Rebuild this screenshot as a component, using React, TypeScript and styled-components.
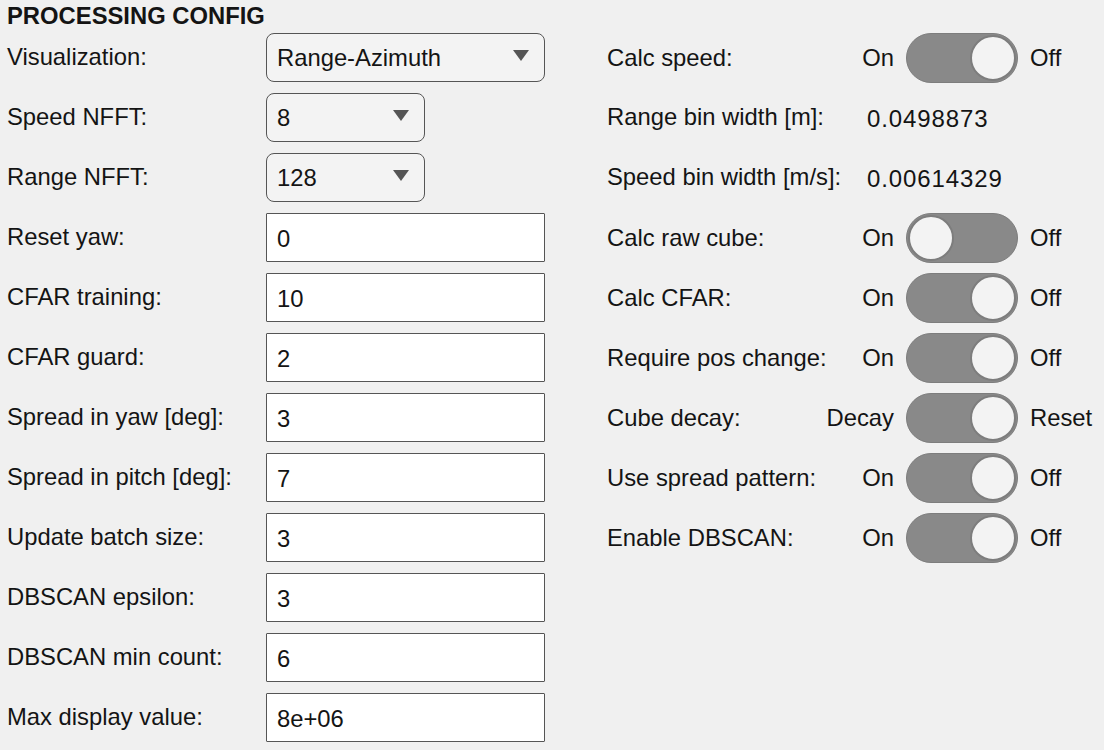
import { createGlobalStyle } from "styled-components";
import styled from "styled-components";

const GlobalStyle = createGlobalStyle`
  html, body {
    margin: 0;
    padding: 0;
    background: #f0f0f0;
  }
  body {
    font-family: "Liberation Sans", Arial, sans-serif;
    color: #141414;
  }
`;

const leftRows: { label: string; kind: "select" | "input"; value: string; wide?: boolean }[] = [
  { label: "Visualization:", kind: "select", value: "Range-Azimuth", wide: true },
  { label: "Speed NFFT:", kind: "select", value: "8" },
  { label: "Range NFFT:", kind: "select", value: "128" },
  { label: "Reset yaw:", kind: "input", value: "0" },
  { label: "CFAR training:", kind: "input", value: "10" },
  { label: "CFAR guard:", kind: "input", value: "2" },
  { label: "Spread in yaw [deg]:", kind: "input", value: "3" },
  { label: "Spread in pitch [deg]:", kind: "input", value: "7" },
  { label: "Update batch size:", kind: "input", value: "3" },
  { label: "DBSCAN epsilon:", kind: "input", value: "3" },
  { label: "DBSCAN min count:", kind: "input", value: "6" },
  { label: "Max display value:", kind: "input", value: "8e+06" },
];

type RightRow =
  | { label: string; kind: "value"; value: string }
  | { label: string; kind: "toggle"; on: string; off: string; right: boolean };

const rightRows: RightRow[] = [
  { label: "Calc speed:", kind: "toggle", on: "On", off: "Off", right: true },
  { label: "Range bin width [m]:", kind: "value", value: "0.0498873" },
  { label: "Speed bin width [m/s]:", kind: "value", value: "0.00614329" },
  { label: "Calc raw cube:", kind: "toggle", on: "On", off: "Off", right: false },
  { label: "Calc CFAR:", kind: "toggle", on: "On", off: "Off", right: true },
  { label: "Require pos change:", kind: "toggle", on: "On", off: "Off", right: true },
  { label: "Cube decay:", kind: "toggle", on: "Decay", off: "Reset", right: true },
  { label: "Use spread pattern:", kind: "toggle", on: "On", off: "Off", right: true },
  { label: "Enable DBSCAN:", kind: "toggle", on: "On", off: "Off", right: true },
];

export default function App() {
  return (
    <>
      <GlobalStyle />
      <Page>
        <Title>PROCESSING CONFIG</Title>
        <Columns>
          <Column>
            {leftRows.map((row) => (
              <LeftRow key={row.label}>
                <Label>{row.label}</Label>
                {row.kind === "select" ? (
                  <SelectBox $wide={row.wide}>
                    <span>{row.value}</span>
                    <Arrow />
                  </SelectBox>
                ) : (
                  <InputBox>{row.value}</InputBox>
                )}
              </LeftRow>
            ))}
          </Column>
          <Column>
            {rightRows.map((row) => (
              <SettingRow key={row.label}>
                <Label>{row.label}</Label>
                {row.kind === "value" ? (
                  <ValueText>{row.value}</ValueText>
                ) : (
                  <ToggleGroup>
                    <SideText>{row.on}</SideText>
                    <Track $right={row.right}>
                      <Knob />
                    </Track>
                    <OffText>{row.off}</OffText>
                  </ToggleGroup>
                )}
              </SettingRow>
            ))}
          </Column>
        </Columns>
      </Page>
    </>
  );
}

const Page = styled.div`
  padding: 0 7px;
  font-size: 23.8px;
`;

const Title = styled.div`
  font-weight: 700;
  line-height: 31px;
  height: 31px;
  margin-bottom: 2px;
`;

const Columns = styled.div`
  display: grid;
  grid-template-columns: 538px 1fr;
  column-gap: 62px;
`;

const Column = styled.div`
  display: flex;
  flex-direction: column;
  gap: 11px;
`;

const LeftRow = styled.div`
  display: grid;
  grid-template-columns: 259px 1fr;
  align-items: center;
  height: 49px;
`;

const SettingRow = styled.div`
  display: grid;
  grid-template-columns: 219px 1fr;
  align-items: center;
  height: 49px;
`;

const Label = styled.div`
  white-space: nowrap;
  padding-bottom: 1px;
`;

const SelectBox = styled.div<{ $wide?: boolean }>`
  box-sizing: border-box;
  width: ${(p) => (p.$wide ? "279px" : "159px")};
  height: 49px;
  border: 1.5px solid #555;
  border-radius: 8px;
  background: #f3f3f3;
  display: flex;
  align-items: center;
  justify-content: space-between;
  padding: 0 15px 0 10px;
`;

const Arrow = styled.div`
  width: 0;
  height: 0;
  border-left: 8px solid transparent;
  border-right: 8px solid transparent;
  border-top: 11px solid #555;
  margin-bottom: 5px;
`;

const InputBox = styled.div`
  box-sizing: border-box;
  width: 279px;
  height: 49px;
  border: 1.5px solid #555;
  border-radius: 1px;
  background: #fff;
  display: flex;
  align-items: center;
  padding: 2px 10px 0;
`;

const ValueText = styled.div`
  font-size: 24px;
  letter-spacing: 0.9px;
  padding-left: 41px;
  padding-top: 2px;
`;

const ToggleGroup = styled.div`
  display: flex;
  align-items: center;
  gap: 12px;
`;

const SideText = styled.div`
  width: 68px;
  text-align: right;
`;

const OffText = styled.div`
  white-space: nowrap;
`;

const Track = styled.div<{ $right: boolean }>`
  box-sizing: border-box;
  width: 112px;
  height: 50px;
  border-radius: 25px;
  background: #898989;
  border: 1.5px solid #7d7d7d;
  display: flex;
  align-items: center;
  justify-content: ${(p) => (p.$right ? "flex-end" : "flex-start")};
  padding: 0 1px;
`;

const Knob = styled.div`
  box-sizing: border-box;
  width: 46px;
  height: 46px;
  border-radius: 50%;
  background: #f3f3f3;
  border: 2px solid #7d7d7d;
`;
